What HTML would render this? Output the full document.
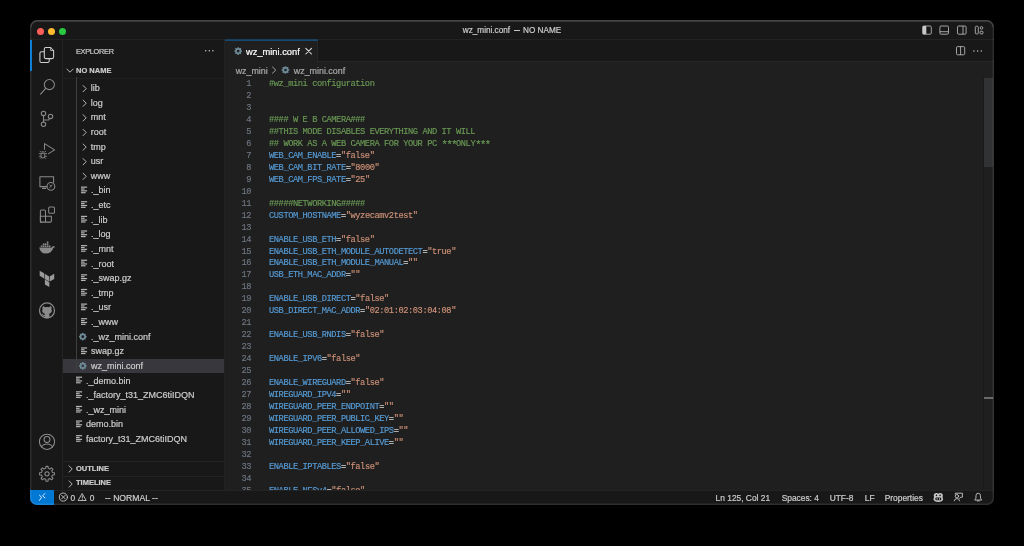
<!DOCTYPE html>
<html><head><meta charset="utf-8">
<style>
*{margin:0;padding:0;box-sizing:border-box}
html,body{width:1024px;height:546px;background:#000;overflow:hidden}
body{position:relative;font-family:"Liberation Sans",sans-serif;color:#ccc}
.sw{-webkit-text-stroke:0.2px currentColor}
#win{position:absolute;left:30px;top:20px;width:964px;height:485px;border-radius:7px;background:#181818;overflow:hidden;will-change:transform}
#pg{position:absolute;left:-30px;top:-20px;width:1024px;height:546px}
#winborder{position:absolute;left:30px;top:20px;width:964px;height:485px;border-radius:7px;border:1px solid rgba(255,255,255,0.13);pointer-events:none}
.p{position:absolute}
.tl{position:absolute;top:27.5px;width:7.4px;height:7.4px;border-radius:50%}
#titletext{position:absolute;left:30px;width:964px;top:26px;text-align:center;font-size:8.2px;color:#cccccc;line-height:10px;-webkit-text-stroke:0.2px #cccccc}
.lbl{position:absolute;font-size:9px;line-height:14.62px;white-space:nowrap;color:#cccccc;-webkit-text-stroke:0.2px #cccccc}
.code{position:absolute;left:269px;transform:scaleY(1.11);transform-origin:0 8.3px;font-family:"Liberation Mono",monospace;font-size:8.7px;letter-spacing:-0.42px;line-height:11.95px;white-space:pre}
.ln{position:absolute;left:225px;transform:scaleY(1.11);transform-origin:0 8.3px;width:26px;text-align:right;color:#6e7681;-webkit-text-stroke:0.15px #6e7681;font-family:"Liberation Mono",monospace;font-size:8.7px;letter-spacing:-0.42px;line-height:11.95px}
.k{color:#569cd6;-webkit-text-stroke:0.15px #569cd6}.s{color:#ce9178;-webkit-text-stroke:0.15px #ce9178}.c{color:#6a9955;-webkit-text-stroke:0.15px #6a9955}.e{color:#d4d4d4;-webkit-text-stroke:0.15px #d4d4d4}
svg{position:absolute;overflow:visible}
.ast{position:relative;top:2.2px;font-size:10.5px;letter-spacing:-1.5px;line-height:1px}
.st{position:absolute;top:492.5px;line-height:10px;font-size:8.4px;color:#cccccc;white-space:nowrap;-webkit-text-stroke:0.2px #cccccc}
.hdr{position:absolute;font-weight:bold;font-size:7.5px;color:#cccccc;white-space:nowrap;line-height:10px;-webkit-text-stroke:0.2px #cccccc}
</style></head><body>
<div id="win"><div id="pg">
  <!-- title bar -->
  <div class="p" style="left:30px;top:39px;width:964px;height:1px;background:#232323"></div>
  <div class="tl" style="left:36.7px;background:#ff5f57"></div>
  <div class="tl" style="left:47.7px;background:#febc2e"></div>
  <div class="tl" style="left:58.8px;background:#28c840"></div>
  <div id="titletext">wz_mini.conf <span style="display:inline-block;width:6px;height:0.9px;background:#c4c4c4;vertical-align:2.6px;margin:0 1.2px"></span> NO NAME</div>
  <!-- activity bar -->
  <div class="p" style="left:62px;top:40px;width:1px;height:450px;background:#232323"></div>
  <div class="p" style="left:30px;top:40px;width:1.6px;height:31px;background:#0078d4"></div>
  <!-- sidebar -->
  <div class="p" style="left:63px;top:77.5px;width:161px;height:1px;background:#1e201e"></div>
  <div class="p" style="left:224px;top:40px;width:1px;height:450px;background:#232323"></div>
  <div class="p" style="left:76px;top:47px;font-size:7.3px;letter-spacing:-0.26px;line-height:10px;color:#cccccc;-webkit-text-stroke:0.2px #cccccc">EXPLORER</div>
  <svg width="10" height="2" style="left:204.5px;top:50.3px"><g fill="#c5c5c5"><circle cx="0.7" cy="0.8" r="0.75"/><circle cx="4.3" cy="0.8" r="0.75"/><circle cx="7.9" cy="0.8" r="0.75"/></g></svg>
  <div class="hdr" style="left:76px;top:66px">NO NAME</div>
  <svg width="8" height="5" viewBox="0 0 8 5" style="left:66px;top:68px"><path d="M0.6 0.8L4 4.2L7.4 0.8" fill="none" stroke="#c5c5c5" stroke-width="0.9"/></svg>
    <div class="p" style="left:63px;top:359px;width:161px;height:14.4px;background:#37373d"></div>
  <div class="p" style="left:76px;top:77px;width:1px;height:296.4px;background:#3f3f3f"></div>
  <div class="lbl" style="left:90.8px;top:81.10px">lib</div>
<div class="lbl" style="left:90.8px;top:95.72px">log</div>
<div class="lbl" style="left:90.8px;top:110.34px">mnt</div>
<div class="lbl" style="left:90.8px;top:124.96px">root</div>
<div class="lbl" style="left:90.8px;top:139.58px">tmp</div>
<div class="lbl" style="left:90.8px;top:154.20px">usr</div>
<div class="lbl" style="left:90.8px;top:168.82px">www</div>
<div class="lbl" style="left:91px;top:183.44px">._bin</div>
<div class="lbl" style="left:91px;top:198.06px">._etc</div>
<div class="lbl" style="left:91px;top:212.68px">._lib</div>
<div class="lbl" style="left:91px;top:227.30px">._log</div>
<div class="lbl" style="left:91px;top:241.92px">._mnt</div>
<div class="lbl" style="left:91px;top:256.54px">._root</div>
<div class="lbl" style="left:91px;top:271.16px">._swap.gz</div>
<div class="lbl" style="left:91px;top:285.78px">._tmp</div>
<div class="lbl" style="left:91px;top:300.40px">._usr</div>
<div class="lbl" style="left:91px;top:315.02px">._www</div>
<div class="lbl" style="left:91px;top:329.64px">._wz_mini.conf</div>
<div class="lbl" style="left:91px;top:344.26px">swap.gz</div>
<div class="lbl" style="left:91px;top:358.88px">wz_mini.conf</div>
<div class="lbl" style="left:86px;top:373.50px">._demo.bin</div>
<div class="lbl" style="left:86px;top:388.12px">._factory_t31_ZMC6tiIDQN</div>
<div class="lbl" style="left:86px;top:402.74px">._wz_mini</div>
<div class="lbl" style="left:86px;top:417.36px">demo.bin</div>
<div class="lbl" style="left:86px;top:431.98px">factory_t31_ZMC6tiIDQN</div>
<svg width="1024" height="546" style="left:0;top:0"><g transform="translate(82,84.61)"><path d="M0.8 0.6L4.2 4L0.8 7.4" fill="none" stroke="#c5c5c5" stroke-width="0.9"/></g><g transform="translate(82,99.23)"><path d="M0.8 0.6L4.2 4L0.8 7.4" fill="none" stroke="#c5c5c5" stroke-width="0.9"/></g><g transform="translate(82,113.85)"><path d="M0.8 0.6L4.2 4L0.8 7.4" fill="none" stroke="#c5c5c5" stroke-width="0.9"/></g><g transform="translate(82,128.47)"><path d="M0.8 0.6L4.2 4L0.8 7.4" fill="none" stroke="#c5c5c5" stroke-width="0.9"/></g><g transform="translate(82,143.09)"><path d="M0.8 0.6L4.2 4L0.8 7.4" fill="none" stroke="#c5c5c5" stroke-width="0.9"/></g><g transform="translate(82,157.71)"><path d="M0.8 0.6L4.2 4L0.8 7.4" fill="none" stroke="#c5c5c5" stroke-width="0.9"/></g><g transform="translate(82,172.33)"><path d="M0.8 0.6L4.2 4L0.8 7.4" fill="none" stroke="#c5c5c5" stroke-width="0.9"/></g><g transform="translate(81.0,186.55)" fill="#b4b4b4"><rect x="0" y="0" width="6.1" height="1.2"/><rect x="0" y="1.85" width="3.6" height="1.2"/><rect x="0" y="3.7" width="6.1" height="1.2"/><rect x="0" y="5.55" width="4.6" height="1.2"/></g><g transform="translate(81.0,201.17)" fill="#b4b4b4"><rect x="0" y="0" width="6.1" height="1.2"/><rect x="0" y="1.85" width="3.6" height="1.2"/><rect x="0" y="3.7" width="6.1" height="1.2"/><rect x="0" y="5.55" width="4.6" height="1.2"/></g><g transform="translate(81.0,215.79)" fill="#b4b4b4"><rect x="0" y="0" width="6.1" height="1.2"/><rect x="0" y="1.85" width="3.6" height="1.2"/><rect x="0" y="3.7" width="6.1" height="1.2"/><rect x="0" y="5.55" width="4.6" height="1.2"/></g><g transform="translate(81.0,230.41)" fill="#b4b4b4"><rect x="0" y="0" width="6.1" height="1.2"/><rect x="0" y="1.85" width="3.6" height="1.2"/><rect x="0" y="3.7" width="6.1" height="1.2"/><rect x="0" y="5.55" width="4.6" height="1.2"/></g><g transform="translate(81.0,245.03)" fill="#b4b4b4"><rect x="0" y="0" width="6.1" height="1.2"/><rect x="0" y="1.85" width="3.6" height="1.2"/><rect x="0" y="3.7" width="6.1" height="1.2"/><rect x="0" y="5.55" width="4.6" height="1.2"/></g><g transform="translate(81.0,259.65)" fill="#b4b4b4"><rect x="0" y="0" width="6.1" height="1.2"/><rect x="0" y="1.85" width="3.6" height="1.2"/><rect x="0" y="3.7" width="6.1" height="1.2"/><rect x="0" y="5.55" width="4.6" height="1.2"/></g><g transform="translate(81.0,274.27)" fill="#b4b4b4"><rect x="0" y="0" width="6.1" height="1.2"/><rect x="0" y="1.85" width="3.6" height="1.2"/><rect x="0" y="3.7" width="6.1" height="1.2"/><rect x="0" y="5.55" width="4.6" height="1.2"/></g><g transform="translate(81.0,288.89)" fill="#b4b4b4"><rect x="0" y="0" width="6.1" height="1.2"/><rect x="0" y="1.85" width="3.6" height="1.2"/><rect x="0" y="3.7" width="6.1" height="1.2"/><rect x="0" y="5.55" width="4.6" height="1.2"/></g><g transform="translate(81.0,303.51)" fill="#b4b4b4"><rect x="0" y="0" width="6.1" height="1.2"/><rect x="0" y="1.85" width="3.6" height="1.2"/><rect x="0" y="3.7" width="6.1" height="1.2"/><rect x="0" y="5.55" width="4.6" height="1.2"/></g><g transform="translate(81.0,318.13)" fill="#b4b4b4"><rect x="0" y="0" width="6.1" height="1.2"/><rect x="0" y="1.85" width="3.6" height="1.2"/><rect x="0" y="3.7" width="6.1" height="1.2"/><rect x="0" y="5.55" width="4.6" height="1.2"/></g><g transform="translate(78.8,332.65) scale(0.5)"><path fill="#6d8a96" fill-rule="evenodd" d="M6.43 1.90 L6.68 0.41 L9.32 0.41 L9.57 1.90 L11.21 2.58 L12.43 1.70 L14.30 3.57 L13.42 4.79 L14.10 6.43 L15.59 6.68 L15.59 9.32 L14.10 9.57 L13.42 11.21 L14.30 12.43 L12.43 14.30 L11.21 13.42 L9.57 14.10 L9.32 15.59 L6.68 15.59 L6.43 14.10 L4.79 13.42 L3.57 14.30 L1.70 12.43 L2.58 11.21 L1.90 9.57 L0.41 9.32 L0.41 6.68 L1.90 6.43 L2.58 4.79 L1.70 3.57 L3.57 1.70 L4.79 2.58Z M10.70 8.00A2.7 2.7 0 1 0 5.30 8.00A2.7 2.7 0 1 0 10.70 8.00Z"/></g><g transform="translate(81.0,347.37)" fill="#b4b4b4"><rect x="0" y="0" width="6.1" height="1.2"/><rect x="0" y="1.85" width="3.6" height="1.2"/><rect x="0" y="3.7" width="6.1" height="1.2"/><rect x="0" y="5.55" width="4.6" height="1.2"/></g><g transform="translate(78.8,361.89) scale(0.5)"><path fill="#6d8a96" fill-rule="evenodd" d="M6.43 1.90 L6.68 0.41 L9.32 0.41 L9.57 1.90 L11.21 2.58 L12.43 1.70 L14.30 3.57 L13.42 4.79 L14.10 6.43 L15.59 6.68 L15.59 9.32 L14.10 9.57 L13.42 11.21 L14.30 12.43 L12.43 14.30 L11.21 13.42 L9.57 14.10 L9.32 15.59 L6.68 15.59 L6.43 14.10 L4.79 13.42 L3.57 14.30 L1.70 12.43 L2.58 11.21 L1.90 9.57 L0.41 9.32 L0.41 6.68 L1.90 6.43 L2.58 4.79 L1.70 3.57 L3.57 1.70 L4.79 2.58Z M10.70 8.00A2.7 2.7 0 1 0 5.30 8.00A2.7 2.7 0 1 0 10.70 8.00Z"/></g><g transform="translate(76.0,376.61)" fill="#b4b4b4"><rect x="0" y="0" width="6.1" height="1.2"/><rect x="0" y="1.85" width="3.6" height="1.2"/><rect x="0" y="3.7" width="6.1" height="1.2"/><rect x="0" y="5.55" width="4.6" height="1.2"/></g><g transform="translate(76.0,391.23)" fill="#b4b4b4"><rect x="0" y="0" width="6.1" height="1.2"/><rect x="0" y="1.85" width="3.6" height="1.2"/><rect x="0" y="3.7" width="6.1" height="1.2"/><rect x="0" y="5.55" width="4.6" height="1.2"/></g><g transform="translate(76.0,405.85)" fill="#b4b4b4"><rect x="0" y="0" width="6.1" height="1.2"/><rect x="0" y="1.85" width="3.6" height="1.2"/><rect x="0" y="3.7" width="6.1" height="1.2"/><rect x="0" y="5.55" width="4.6" height="1.2"/></g><g transform="translate(76.0,420.47)" fill="#b4b4b4"><rect x="0" y="0" width="6.1" height="1.2"/><rect x="0" y="1.85" width="3.6" height="1.2"/><rect x="0" y="3.7" width="6.1" height="1.2"/><rect x="0" y="5.55" width="4.6" height="1.2"/></g><g transform="translate(76.0,435.09)" fill="#b4b4b4"><rect x="0" y="0" width="6.1" height="1.2"/><rect x="0" y="1.85" width="3.6" height="1.2"/><rect x="0" y="3.7" width="6.1" height="1.2"/><rect x="0" y="5.55" width="4.6" height="1.2"/></g></svg>
  <div class="p" style="left:63px;top:461px;width:161px;height:1px;background:#232323"></div>
  <div class="p" style="left:63px;top:475.5px;width:161px;height:1px;background:#232323"></div>
  <svg width="5" height="8" viewBox="0 0 5 8" style="left:67.5px;top:465px"><path d="M0.8 0.6L4.2 4L0.8 7.4" fill="none" stroke="#c5c5c5" stroke-width="0.9"/></svg>
  <div class="hdr" style="left:76px;top:463.5px">OUTLINE</div>
  <svg width="5" height="8" viewBox="0 0 5 8" style="left:67.5px;top:479.5px"><path d="M0.8 0.6L4.2 4L0.8 7.4" fill="none" stroke="#c5c5c5" stroke-width="0.9"/></svg>
  <div class="hdr" style="left:76px;top:478px">TIMELINE</div>
  <!-- editor -->
  <div class="p" style="left:225px;top:40px;width:769px;height:450px;background:#1f1f1f"></div>
  <div class="p" style="left:225px;top:40px;width:769px;height:22px;background:#181818;border-bottom:1px solid #262626"></div>
  <div class="p" style="left:225px;top:40px;width:93px;height:23px;background:#1f1f1f;border-right:1px solid #262626"></div>
  <svg width="1024" height="546" style="left:0;top:0"><rect x="225" y="39.4" width="93" height="1.5" fill="#0b6bb5" fill-opacity="0.62"/></svg>
  <div class="p" style="left:246px;top:46.5px;font-size:9.3px;line-height:10px;color:#ffffff;white-space:nowrap;-webkit-text-stroke:0.2px #fff">wz_mini.conf</div>
  <div class="p" style="left:235.7px;top:65.7px;font-size:8.9px;line-height:10px;color:#a9a9a9;white-space:nowrap;-webkit-text-stroke:0.2px #a9a9a9">wz_mini</div>
  <div class="p" style="left:293.8px;top:65.7px;font-size:8.9px;line-height:10px;color:#a9a9a9;white-space:nowrap;-webkit-text-stroke:0.2px #a9a9a9">wz_mini.conf</div>
  <div class="ln" style="top:79.20px">1</div>
<div class="code c" style="top:79.20px">#wz_mini configuration</div>
<div class="ln" style="top:91.15px">2</div>
<div class="ln" style="top:103.10px">3</div>
<div class="ln" style="top:115.05px">4</div>
<div class="code c" style="top:115.05px">#### W E B CAMERA###</div>
<div class="ln" style="top:127.00px">5</div>
<div class="code c" style="top:127.00px">##THIS MODE DISABLES EVERYTHING AND IT WILL</div>
<div class="ln" style="top:138.95px">6</div>
<div class="code c" style="top:138.95px">## WORK AS A WEB CAMERA FOR YOUR PC <span class="ast">*</span><span class="ast">*</span><span class="ast">*</span>ONLY<span class="ast">*</span><span class="ast">*</span><span class="ast">*</span></div>
<div class="ln" style="top:150.90px">7</div>
<div class="code" style="top:150.90px"><span class="k">WEB_CAM_ENABLE</span><span class="e">=</span><span class="s">&quot;false&quot;</span></div>
<div class="ln" style="top:162.85px">8</div>
<div class="code" style="top:162.85px"><span class="k">WEB_CAM_BIT_RATE</span><span class="e">=</span><span class="s">&quot;8000&quot;</span></div>
<div class="ln" style="top:174.80px">9</div>
<div class="code" style="top:174.80px"><span class="k">WEB_CAM_FPS_RATE</span><span class="e">=</span><span class="s">&quot;25&quot;</span></div>
<div class="ln" style="top:186.75px">10</div>
<div class="ln" style="top:198.70px">11</div>
<div class="code c" style="top:198.70px">#####NETWORKING#####</div>
<div class="ln" style="top:210.65px">12</div>
<div class="code" style="top:210.65px"><span class="k">CUSTOM_HOSTNAME</span><span class="e">=</span><span class="s">&quot;wyzecamv2test&quot;</span></div>
<div class="ln" style="top:222.60px">13</div>
<div class="ln" style="top:234.55px">14</div>
<div class="code" style="top:234.55px"><span class="k">ENABLE_USB_ETH</span><span class="e">=</span><span class="s">&quot;false&quot;</span></div>
<div class="ln" style="top:246.50px">15</div>
<div class="code" style="top:246.50px"><span class="k">ENABLE_USB_ETH_MODULE_AUTODETECT</span><span class="e">=</span><span class="s">&quot;true&quot;</span></div>
<div class="ln" style="top:258.45px">16</div>
<div class="code" style="top:258.45px"><span class="k">ENABLE_USB_ETH_MODULE_MANUAL</span><span class="e">=</span><span class="s">&quot;&quot;</span></div>
<div class="ln" style="top:270.40px">17</div>
<div class="code" style="top:270.40px"><span class="k">USB_ETH_MAC_ADDR</span><span class="e">=</span><span class="s">&quot;&quot;</span></div>
<div class="ln" style="top:282.35px">18</div>
<div class="ln" style="top:294.30px">19</div>
<div class="code" style="top:294.30px"><span class="k">ENABLE_USB_DIRECT</span><span class="e">=</span><span class="s">&quot;false&quot;</span></div>
<div class="ln" style="top:306.25px">20</div>
<div class="code" style="top:306.25px"><span class="k">USB_DIRECT_MAC_ADDR</span><span class="e">=</span><span class="s">&quot;02:01:02:03:04:08&quot;</span></div>
<div class="ln" style="top:318.20px">21</div>
<div class="ln" style="top:330.15px">22</div>
<div class="code" style="top:330.15px"><span class="k">ENABLE_USB_RNDIS</span><span class="e">=</span><span class="s">&quot;false&quot;</span></div>
<div class="ln" style="top:342.10px">23</div>
<div class="ln" style="top:354.05px">24</div>
<div class="code" style="top:354.05px"><span class="k">ENABLE_IPV6</span><span class="e">=</span><span class="s">&quot;false&quot;</span></div>
<div class="ln" style="top:366.00px">25</div>
<div class="ln" style="top:377.95px">26</div>
<div class="code" style="top:377.95px"><span class="k">ENABLE_WIREGUARD</span><span class="e">=</span><span class="s">&quot;false&quot;</span></div>
<div class="ln" style="top:389.90px">27</div>
<div class="code" style="top:389.90px"><span class="k">WIREGUARD_IPV4</span><span class="e">=</span><span class="s">&quot;&quot;</span></div>
<div class="ln" style="top:401.85px">28</div>
<div class="code" style="top:401.85px"><span class="k">WIREGUARD_PEER_ENDPOINT</span><span class="e">=</span><span class="s">&quot;&quot;</span></div>
<div class="ln" style="top:413.80px">29</div>
<div class="code" style="top:413.80px"><span class="k">WIREGUARD_PEER_PUBLIC_KEY</span><span class="e">=</span><span class="s">&quot;&quot;</span></div>
<div class="ln" style="top:425.75px">30</div>
<div class="code" style="top:425.75px"><span class="k">WIREGUARD_PEER_ALLOWED_IPS</span><span class="e">=</span><span class="s">&quot;&quot;</span></div>
<div class="ln" style="top:437.70px">31</div>
<div class="code" style="top:437.70px"><span class="k">WIREGUARD_PEER_KEEP_ALIVE</span><span class="e">=</span><span class="s">&quot;&quot;</span></div>
<div class="ln" style="top:449.65px">32</div>
<div class="ln" style="top:461.60px">33</div>
<div class="code" style="top:461.60px"><span class="k">ENABLE_IPTABLES</span><span class="e">=</span><span class="s">&quot;false&quot;</span></div>
<div class="ln" style="top:473.55px">34</div>
<div class="ln" style="top:485.50px">35</div>
<div class="code" style="top:485.50px"><span class="k">ENABLE_NFSv4</span><span class="e">=</span><span class="s">&quot;false&quot;</span></div>
  <!-- scrollbar -->
  <div class="p" style="left:983px;top:77px;width:1px;height:413px;background:#1a1a1a"></div>
  <div class="p" style="left:984px;top:397px;width:9.2px;height:2px;background:#6a6a6a"></div>
  <div class="p" style="left:983.7px;top:78px;width:9.3px;height:88.6px;background:#303234"></div>
    <!-- status bar -->
  <div class="p" style="left:30px;top:490px;width:964px;height:15px;background:#181818;border-top:1px solid #232323"></div>
  <div class="p" style="left:30px;top:490px;width:24px;height:15px;background:#0078d4"></div>
  <div class="st" style="left:70.6px">0</div>
  <div class="st" style="left:89.7px">0</div>
  <div class="st" style="left:105px;font-size:8.65px">-- NORMAL --</div>
  <div class="st" style="left:715.6px">Ln 125, Col 21</div>
  <div class="st" style="left:781.7px">Spaces: 4</div>
  <div class="st" style="left:829.7px">UTF-8</div>
  <div class="st" style="left:864.8px">LF</div>
  <div class="st" style="left:884.7px">Properties</div>
<svg width="1024" height="546" viewBox="0 0 1024 546" style="left:0;top:0">
 <g fill="none" stroke-linecap="round" stroke-linejoin="round">
  <!-- files (active) -->
  <g stroke="#cfcfcf" stroke-width="1.05">
   <path d="M44.3 51.7H41.4Q39.9 51.7 39.9 53.2V60.9Q39.9 62.4 41.4 62.4H47.7Q49.2 62.4 49.2 60.9V58.6"/>
   <path d="M44.3 49Q44.3 47.5 45.8 47.5H50.6L53.6 50.5V57.1Q53.6 58.6 52.1 58.6H45.8Q44.3 58.6 44.3 57.1Z"/>
   <path d="M50.6 47.5V50.5H53.6" stroke-width="0.8"/>
  </g>
  <g stroke="#8a8a8a" stroke-width="1.05">
   <!-- search -->
   <circle cx="49.35" cy="84.6" r="5.05"/>
   <path d="M45.7 88.3L40.6 94.2"/>
   <!-- scm -->
   <circle cx="43.5" cy="113.4" r="2.2"/>
   <circle cx="43.5" cy="124.2" r="2.2"/>
   <circle cx="50.5" cy="116.4" r="2.2"/>
   <path d="M43.5 115.6V122"/>
   <path d="M43.5 120H48.6L49.6 118.4"/>
   <!-- debug -->
   <path d="M44.5 149.2V143.6L54.6 149.9L48.6 153.6"/>
   <!-- remote explorer -->
   <path d="M46.8 186.6H39.9V176.8H53.6V182.2"/><path d="M42.6 188.4H45.6" stroke-width="1.2"/>
   <circle cx="50.9" cy="186.3" r="3.9"/>
   <path d="M49.6 185L51.4 186.3L49.6 187.6M52.3 184.9L50.9 186.3" stroke-width="0.8"/>
   <!-- extensions -->
   <path d="M40.4 216.3V211Q40.4 209.9 41.5 209.9H44.4Q45.5 209.9 45.5 211V222.1H40.4V216.3H51.4V221Q51.4 222.1 50.3 222.1H45.5"/>
   <path d="M40.4 216.3V221Q40.4 222.1 41.5 222.1"/>
   <rect x="48.7" y="207" width="5.8" height="6.3" rx="1.1"/>
   <!-- github -->
   <circle cx="47" cy="310.4" r="7.5" stroke-width="1.25"/>
   <!-- account -->
   <circle cx="47" cy="441.8" r="7.6"/>
   <circle cx="47" cy="439.5" r="2.95"/>
   <path d="M41.5 447.1Q42.6 443.9 47 443.9Q51.4 443.9 52.5 447.1"/>
   <!-- gear -->
   <circle cx="47" cy="473.8" r="2.1"/>
   <path d="M45.78 468.33 L45.94 466.37 L48.06 466.37 L48.22 468.33 L50.00 469.07 L51.50 467.80 L53.00 469.30 L51.73 470.80 L52.47 472.58 L54.43 472.74 L54.43 474.86 L52.47 475.02 L51.73 476.80 L53.00 478.30 L51.50 479.80 L50.00 478.53 L48.22 479.27 L48.06 481.23 L45.94 481.23 L45.78 479.27 L44.00 478.53 L42.50 479.80 L41.00 478.30 L42.27 476.80 L41.53 475.02 L39.57 474.86 L39.57 472.74 L41.53 472.58 L42.27 470.80 L41.00 469.30 L42.50 467.80 L44.00 469.07Z"/>
  </g>
  <!-- bug body -->
  <g fill="#8a8a8a" stroke="none">
   <path d="M40.6 153.4Q40.8 151.4 42.9 151.3Q45 151.4 45.2 153.4V156.2Q45 158.4 42.9 158.4Q40.8 158.4 40.6 156.2Z"/>
  </g>
  <g stroke="#8a8a8a" stroke-width="0.8">
   <path d="M39.2 153.6H40.6M45.2 153.6H46.6M39.2 156.3H40.6M45.2 156.3H46.6M40 151.2L41 152.2M45.8 151.2L44.8 152.2M40 158.6L41 157.6M45.8 158.6L44.8 157.6"/>
  </g>
  <g fill="#181818" stroke="none"><path d="M41.5 153.5Q42.9 154.3 44.3 153.5V155.9Q44.1 157.5 42.9 157.6Q41.7 157.5 41.5 155.9Z"/><path d="M41.2 152.6H44.6" stroke="#181818" stroke-width="0.6"/></g>
  <!-- docker -->
  <g fill="#8a8a8a" stroke="none">
   <path d="M39.2 247.4H51.6Q52.4 246 53.4 245.9Q54.6 246.2 55.3 246.9Q54.2 247.7 53.4 247.7Q51.6 253.5 45.6 253.6Q40.4 253.5 39.2 247.4Z"/>
   <rect x="40.8" y="245.4" width="1.6" height="1.6"/><rect x="42.8" y="245.4" width="1.6" height="1.6"/><rect x="44.8" y="245.4" width="1.6" height="1.6"/><rect x="46.8" y="245.4" width="1.6" height="1.6"/><rect x="48.8" y="245.4" width="1.6" height="1.6"/>
   <rect x="42.8" y="243.4" width="1.6" height="1.6"/><rect x="44.8" y="243.4" width="1.6" height="1.6"/><rect x="46.8" y="243.4" width="1.6" height="1.6"/>
   <rect x="46.8" y="241.5" width="1.6" height="1.6"/>
  </g>
  <!-- terraform -->
  <g fill="#9a9a9a" stroke="none">
   <path d="M39.7 270.7L44.1 273.3V278.4L39.7 275.8Z"/>
   <path d="M44.7 273.8L49.1 276.4V281.5L44.7 278.9Z"/>
   <path d="M49.7 276.4L54.2 273.8V278.9L49.7 281.5Z"/>
   <path d="M44.9 279.6L49.3 282.2V287.1L44.9 284.5Z"/>
  </g>
  <!-- github cat -->
  <g fill="#8a8a8a" stroke="none">
   <path d="M42.6 307.1L43.3 306.1L45 307.3Q47 306.9 49 307.3L50.7 306.1L51.4 307.1Q51.7 308.3 51.5 309.4Q52 310.4 51.7 311.7Q51 313.4 49.2 313.8Q49.4 314.4 49.4 315.3V317.9Q47 318.6 44.6 317.9V316Q43.3 316.2 42.6 315.2Q42 314 41.2 313.6Q42.5 313.5 43.2 314.6Q43.8 315.3 44.6 315.1V315Q44.7 314.3 44.9 313.8Q43 313.4 42.3 311.7Q42 310.4 42.5 309.4Q42.3 308.3 42.6 307.1Z"/>
  </g>
 </g>

 <!-- tab/breadcrumb gears -->
 <path fill="#6d8a96" fill-rule="evenodd" d="M237.42 48.00 L237.53 47.21 L238.87 47.21 L238.98 48.00 L239.80 48.34 L240.44 47.86 L241.39 48.81 L240.91 49.45 L241.25 50.27 L242.04 50.38 L242.04 51.72 L241.25 51.83 L240.91 52.65 L241.39 53.29 L240.44 54.24 L239.80 53.76 L238.98 54.10 L238.87 54.89 L237.53 54.89 L237.42 54.10 L236.60 53.76 L235.96 54.24 L235.01 53.29 L235.49 52.65 L235.15 51.83 L234.36 51.72 L234.36 50.38 L235.15 50.27 L235.49 49.45 L235.01 48.81 L235.96 47.86 L236.60 48.34Z M239.55 51.05A1.35 1.35 0 1 0 236.85 51.05A1.35 1.35 0 1 0 239.55 51.05Z"/>
 <path fill="#6d8a96" fill-rule="evenodd" d="M284.72 66.95 L284.83 66.16 L286.17 66.16 L286.28 66.95 L287.10 67.29 L287.74 66.81 L288.69 67.76 L288.21 68.40 L288.55 69.22 L289.34 69.33 L289.34 70.67 L288.55 70.78 L288.21 71.60 L288.69 72.24 L287.74 73.19 L287.10 72.71 L286.28 73.05 L286.17 73.84 L284.83 73.84 L284.72 73.05 L283.90 72.71 L283.26 73.19 L282.31 72.24 L282.79 71.60 L282.45 70.78 L281.66 70.67 L281.66 69.33 L282.45 69.22 L282.79 68.40 L282.31 67.76 L283.26 66.81 L283.90 67.29Z M286.85 70.00A1.35 1.35 0 1 0 284.15 70.00A1.35 1.35 0 1 0 286.85 70.00Z"/>
 <g fill="none" stroke="#b0b0b0" stroke-width="0.9" stroke-linecap="round" stroke-linejoin="round">
  <path d="M272.5 67L275.8 70.1L272.5 73.2"/>
 </g>
 <g fill="none" stroke="#e2e2e2" stroke-width="1.05" stroke-linecap="round">
  <path d="M305.8 48.3L311.5 54M311.5 48.3L305.8 54"/>
 </g>
 <!-- title layout icons -->
 <g fill="none" stroke="#c5c5c5" stroke-width="0.8">
  <rect x="922.7" y="26" width="8.6" height="8.2" rx="1.2"/>
  <rect x="939.9" y="26" width="8.6" height="8.2" rx="1.2"/>
  <path d="M939.9 31.7H948.5"/>
  <rect x="957.5" y="26" width="8.6" height="8.2" rx="1.2"/>
  <path d="M963 26V34.2"/>
  <rect x="975.3" y="26.3" width="3" height="7.6" rx="1"/>
  <circle cx="981.5" cy="27.9" r="1.3"/>
  <rect x="980" y="31.2" width="3" height="2.7" rx="0.9"/>
  <rect x="956.5" y="46.6" width="8.2" height="8.2" rx="1.2"/>
  <path d="M960.6 46.6V54.8"/>
 </g>
 <rect x="922.7" y="26" width="3.6" height="8.2" fill="#c8c8c8"/>
 <g fill="#c8c8c8"><circle cx="973.9" cy="51" r="0.7"/><circle cx="977.6" cy="51" r="0.7"/><circle cx="981.3" cy="51" r="0.7"/></g>

 <!-- status bar icons -->
 <g id="sb" fill="none" stroke-linecap="round" stroke-linejoin="round">
  <path d="M39.5 495.3L41.6 497.2L39.5 500.4M44.9 493.5L42.6 495.8L44.9 497.9" stroke="#e6f1fb" stroke-width="0.95"/>
  <g stroke="#c8c8c8" stroke-width="0.9">
   <circle cx="63.4" cy="497.1" r="4.05"/>
   <path d="M61.6 495.3L65.2 498.9M65.2 495.3L61.6 498.9"/>
   <path d="M82.35 493.8L86.2 500.5H78.5Z"/>
   <path d="M82.35 495.9V498.1" />
   <path d="M82.35 499.3V499.4"/>
   <!-- feedback -->
   <circle cx="956.9" cy="496.2" r="1.7"/>
   <path d="M954.2 500.8Q954.6 498.6 956.9 498.6Q959.2 498.6 959.6 500.8"/>
   <path d="M955.3 494.2V493.2H962.4V497.2H960.9L959.5 498.4"/>
   <!-- bell -->
   <path d="M975 499.8Q976 498.8 976 497V495.6Q976 493.2 978.2 493.2Q980.4 493.2 980.4 495.6V497Q980.4 498.8 981.4 499.8Z"/>
   <path d="M977.3 500.9H979.1"/>
  </g>
  <!-- copilot -->
  <g fill="#c8c8c8" stroke="none">
   <ellipse cx="936.4" cy="495.5" rx="2.6" ry="2.5"/>
   <ellipse cx="940.2" cy="495.5" rx="2.6" ry="2.5"/>
   <path d="M933.6 499.2Q933.6 496.8 935 496.6H941.6Q943 496.8 943 499.2Q942.6 501.9 938.3 502Q934 501.9 933.6 499.2Z"/>
  </g>
  <g fill="#181818" stroke="none">
   <circle cx="936.5" cy="495.4" r="0.8"/><circle cx="940.1" cy="495.4" r="0.8"/>
   <rect x="935.3" y="497.4" width="6" height="2.9" rx="1.1"/>
  </g>
  <g fill="#c8c8c8" stroke="none"><rect x="936.7" y="498" width="0.8" height="1.8"/><rect x="939.1" y="498" width="0.8" height="1.8"/></g>
 </g>
</svg>

</div></div>
<svg width="1024" height="546" style="position:absolute;left:0;top:0;overflow:visible"><rect x="30.7" y="20.7" width="962.6" height="483.6" rx="6.5" fill="none" stroke="#ffffff" stroke-opacity="0.10" stroke-width="1.4"/><path d="M30.9 27.2A6.3 6.3 0 0 1 37.2 20.9H986.8A6.3 6.3 0 0 1 993.1 27.2" fill="none" stroke="#ffffff" stroke-opacity="0.11" stroke-width="1.6"/></svg>
</body></html>
